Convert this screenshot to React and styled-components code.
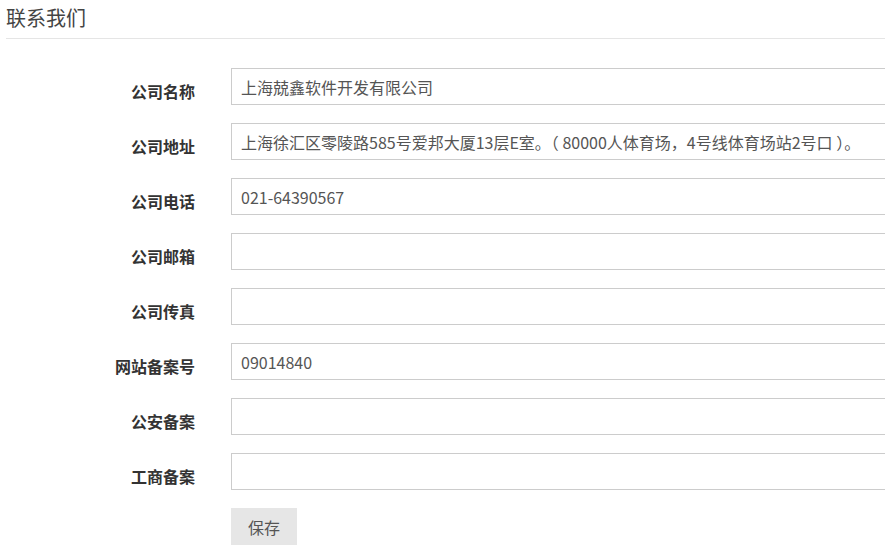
import React from "react"
import styled, { createGlobalStyle } from "styled-components"

const GlobalStyle = createGlobalStyle`
    html, body {
        margin: 0;
        padding: 0;
        background: #fff;
        overflow: hidden;
    }
    body {
        font-family: "Noto Sans CJK SC", "Noto Sans", "Liberation Sans", sans-serif;
        color: #333;
    }
`

const Page = styled.div`
    width: 885px;
    overflow: hidden;
`

const Header = styled.h2`
    margin: 0 0 0 6px;
    padding: 8px 0 11px 0;
    font-size: 20px;
    line-height: 19px;
    font-weight: normal;
    color: #444;
    border-bottom: 1px solid #e5e5e5;
`

const Form = styled.form`
    display: flex;
    flex-direction: column;
    gap: 18px;
    margin-top: 29px;
`

const Row = styled.div`
    display: flex;
    align-items: flex-start;
    gap: 36px;
`

const Label = styled.label`
    width: 195px;
    flex-shrink: 0;
    text-align: right;
    padding-top: 12px;
    font-size: 16px;
    line-height: 23px;
    font-weight: bold;
    color: #333;
`

const Input = styled.input`
    flex: 1;
    margin-right: -20px;
    height: 37px;
    box-sizing: border-box;
    border: 1px solid #ccc;
    padding: 0 9px;
    font-family: inherit;
    font-size: 16px;
    color: #555;
    outline: none;
    background: #fff;
`

const Actions = styled.div`
    padding-left: 231px;
`

const Button = styled.button`
    width: 66px;
    height: 37px;
    padding: 0;
    border: none;
    background: #e6e6e6;
    color: #555;
    font-family: inherit;
    font-size: 16px;
    cursor: pointer;
`

const fields = [
    { label: "公司名称", value: "上海兢鑫软件开发有限公司" },
    { label: "公司地址", value: "上海徐汇区零陵路585号爱邦大厦13层E室。（ 80000人体育场，4号线体育场站2号口 ）。" },
    { label: "公司电话", value: "021-64390567" },
    { label: "公司邮箱", value: "" },
    { label: "公司传真", value: "" },
    { label: "网站备案号", value: "09014840" },
    { label: "公安备案", value: "" },
    { label: "工商备案", value: "" },
]

const App = () => {
    return (
        <Page>
            <GlobalStyle />
            <Header>联系我们</Header>
            <Form onSubmit={(e) => e.preventDefault()}>
                {fields.map((f) => (
                    <Row key={f.label}>
                        <Label>{f.label}</Label>
                        <Input type="text" defaultValue={f.value} />
                    </Row>
                ))}
                <Actions>
                    <Button type="submit">保存</Button>
                </Actions>
            </Form>
        </Page>
    )
}

export default App
